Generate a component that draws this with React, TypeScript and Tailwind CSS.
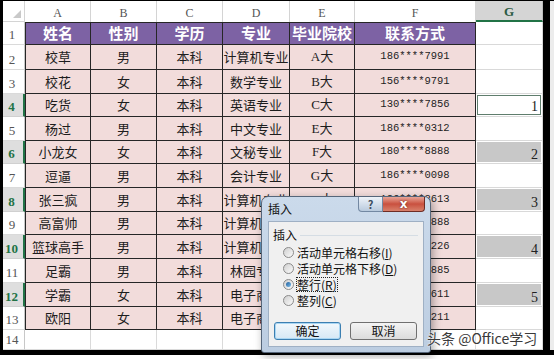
import React from 'react';

const CJK = '"Noto Sans CJK SC", "Noto Sans", sans-serif';
const SERIF_CJK = '"Liberation Serif", "Noto Sans CJK SC", serif';
const MONO = '"Liberation Mono", monospace';

const header = ['姓名', '性别', '学历', '专业', '毕业院校', '联系方式'];
const data: string[][] = [
  ['校草', '男', '本科', '计算机专业', 'A大', '186****7991'],
  ['校花', '女', '本科', '数学专业', 'B大', '156****9791'],
  ['吃货', '女', '本科', '英语专业', 'C大', '130****7856'],
  ['杨过', '男', '本科', '中文专业', 'E大', '186****0312'],
  ['小龙女', '女', '本科', '文秘专业', 'F大', '180****8888'],
  ['逗逼', '男', '本科', '会计专业', 'G大', '186****0098'],
  ['张三疯', '男', '本科', '计算机专业', 'H大', '186****3613'],
  ['高富帅', '男', '本科', '计算机专业', 'I大', '186****8888'],
  ['篮球高手', '男', '本科', '计算机专业', 'J大', '186****1226'],
  ['足霸', '男', '本科', '林园专业', 'K大', '186****8885'],
  ['学霸', '女', '本科', '电子商务', 'L大', '186****4611'],
  ['欧阳', '女', '本科', '电子商务', 'M大', '186****2211'],
];
const gVals: Record<number, string> = { 4: '1', 6: '2', 8: '3', 10: '4', 12: '5' };
const selected = new Set([4, 6, 8, 10, 12]);
const letters = ['A', 'B', 'C', 'D', 'E', 'F'];

function RowHeader({ n }: { n: number }) {
  const sel = selected.has(n);
  return (
    <div
      className={
        sel
          ? 'flex items-end justify-center pr-[3px] pb-[1px] bg-[#dedede] border-b border-[#d0d0d0] border-r-2 border-r-[#217346] text-[#217346] font-bold text-[13px] leading-[16px]'
          : 'flex items-end justify-center pr-[3px] pb-[1px] bg-white border-b border-[#dadada] border-r border-r-[#c8c8c8] text-[#555] text-[13px] leading-[16px]'
      }
      style={{ fontFamily: '"Liberation Serif", serif' }}
    >
      {n}
    </div>
  );
}

function GCell({ n }: { n: number }) {
  const v = gVals[n];
  if (n === 4) {
    return (
      <div className="border-b border-r border-[#d9d9d9] p-[1px]">
        <div
          className="h-full border border-[#5f7d6d] flex items-end justify-end pr-[2px] text-[14px] leading-[15px] text-[#222]"
          style={{ fontFamily: '"Liberation Serif", serif' }}
        >
          {v}
        </div>
      </div>
    );
  }
  if (v) {
    return (
      <div className="border-b border-r border-[#d9d9d9] px-[1px] pt-[1px] pb-[1px]">
        <div
          className="h-full bg-[#c8c8c8] flex items-end justify-end pr-[3px] text-[14px] leading-[15px] text-[#222]"
          style={{ fontFamily: '"Liberation Serif", serif' }}
        >
          {v}
        </div>
      </div>
    );
  }
  return <div className="border-b border-r border-[#d9d9d9] bg-white" />;
}

function Radio({ checked }: { checked?: boolean }) {
  return (
    <div className="w-[11px] h-[11px] rounded-full border border-[#8a8a8a] bg-gradient-to-br from-[#cfcfcf] to-[#fbfbfb] flex items-center justify-center shrink-0">
      {checked && <div className="w-[5px] h-[5px] rounded-full bg-gradient-to-br from-[#1f5d9c] to-[#7fc0ea]" />}
    </div>
  );
}

function Dialog() {
  const options: { label: string; key: string; checked?: boolean }[] = [
    { label: '活动单元格右移', key: 'I' },
    { label: '活动单元格下移', key: 'D' },
    { label: '整行', key: 'R', checked: true },
    { label: '整列', key: 'C' },
  ];
  return (
    <div
      className="absolute left-[261px] top-[196px] w-[170px] h-[157px] rounded-t-[7px] rounded-b-[3px] border border-[#56667a] bg-gradient-to-b from-[#cbdaeb] to-[#bccde1] shadow-[2px_3px_8px_rgba(0,0,0,0.35)] flex flex-col"
      style={{ fontFamily: CJK }}
    >
      <div className="h-[24px] flex items-start">
        <div className="pl-[6px] pt-[5px] text-[12px] leading-[14px] text-[#111]">插入</div>
        <div className="ml-auto mr-[5px] flex">
          <div className="w-[25px] h-[15px] rounded-bl-[4px] border border-t-0 border-[#7388a2] bg-gradient-to-b from-[#eef3f9] to-[#b9cadd] flex items-center justify-center text-[11px] leading-none font-bold text-[#3b4b5e]">
            ?
          </div>
          <div className="w-[42px] h-[15px] rounded-br-[4px] border border-t-0 border-l-0 border-[#6e2c24] bg-gradient-to-b from-[#e7a497] via-[#c9503f] to-[#d8806b] flex items-center justify-center text-[12px] leading-none font-bold text-white [text-shadow:0_0_2px_#5a1a12]" style={{ fontFamily: '"DejaVu Sans", sans-serif' }}>
            x
          </div>
        </div>
      </div>
      <div className="mx-[6px] h-[126px] bg-[#f0f0f0] border border-[#9fb0c4] flex flex-col">
        <div className="flex items-center pl-[4px] pt-[7px] pr-[5px]">
          <span className="text-[12px] leading-[12px] text-[#111]">插入</span>
          <div className="flex-1 h-px bg-[#d5dde4] ml-[3px]" />
        </div>
        <div className="mt-[3px] pl-[14px] flex flex-col">
          {options.map((o) => (
            <div key={o.key} className="h-[16px] flex items-center">
              <Radio checked={o.checked} />
              <span
                className={
                  o.checked
                    ? 'ml-[3px] text-[12px] leading-[13px] text-[#111] outline outline-1 outline-dotted outline-[#222]'
                    : 'ml-[3px] text-[12px] leading-[13px] text-[#111]'
                }
              >
                {o.label}(<span className="underline">{o.key}</span>)
              </span>
            </div>
          ))}
        </div>
        <div className="mt-[14px] pl-[5px] flex gap-[9px]">
          <div className="w-[67px] h-[18px] rounded-[3px] border border-[#3c7fb1] bg-gradient-to-b from-[#f2f8fc] to-[#d6e8f5] shadow-[inset_0_0_0_1px_#a9d6f3] flex items-center justify-center text-[12px] leading-none text-[#111]">
            确定
          </div>
          <div className="w-[67px] h-[18px] rounded-[3px] border border-[#707070] bg-gradient-to-b from-[#f4f4f4] to-[#dcdcdc] flex items-center justify-center text-[12px] leading-none text-[#111]">
            取消
          </div>
        </div>
      </div>
    </div>
  );
}

export default function App() {
  return (
    <div className="relative w-[554px] h-[359px] overflow-hidden bg-white flex flex-col">
      <div className="h-px bg-black w-full" />
      <div className="flex">
        <div className="w-[3px] bg-black" />
        <div className="grid grid-cols-[22px_66px_66px_66px_67px_65px_121px_67px] grid-rows-[21px_23px_25px_24px_23px_24px_23px_24px_24px_23px_24px_24px_24px_23px_20px]">
          {/* column header row */}
          <div className="bg-white border-r border-b border-[#d4d4d4] flex items-end justify-end pr-[3px] pb-[3px]">
            <div className="w-0 h-0 border-l-[8px] border-l-transparent border-b-[8px] border-b-[#c9c9c9]" />
          </div>
          {letters.map((l) => (
            <div
              key={l}
              className="bg-white border-r border-[#d4d4d4] flex items-center justify-center text-[12px] text-[#555] pt-[2px]"
              style={{ fontFamily: '"Liberation Serif", serif' }}
            >
              {l}
            </div>
          ))}
          <div
            className="bg-[#d5d5d5] border-r border-[#bdbdbd] border-b-2 border-b-[#217346] flex items-center justify-center text-[13px] font-bold text-[#2b5a43] pt-[2px]"
            style={{ fontFamily: '"Liberation Serif", serif' }}
          >
            G
          </div>

          {/* row 1 header */}
          <RowHeader n={1} />
          {header.map((h, i) => (
            <div
              key={h}
              className={
                (i === 0 ? 'border-l ' : '') +
                'border-t border-r border-b border-[#262626] bg-[#7d62a4] text-white font-bold text-[15px] flex items-center justify-center'
              }
              style={{ fontFamily: CJK }}
            >
              {h}
            </div>
          ))}
          <GCell n={1} />

          {data.map((row, ri) => {
            const n = ri + 2;
            return (
              <React.Fragment key={n}>
                <RowHeader n={n} />
                {row.map((c, ci) => (
                  <div
                    key={ci}
                    className={
                      (ci === 0 ? 'border-l ' : '') +
                      'border-r border-b border-[#262626] bg-[#f2dcdb] text-[#1d1d1d] flex items-center justify-center whitespace-nowrap overflow-hidden ' +
                      (ci === 5 ? 'text-[10.5px]' : 'text-[13px]')
                    }
                    style={{ fontFamily: ci === 5 ? MONO : ci === 4 ? SERIF_CJK : CJK }}
                  >
                    {c}
                  </div>
                ))}
                <GCell n={n} />
              </React.Fragment>
            );
          })}

          {/* row 14 */}
          <RowHeader n={14} />
          {[0, 1, 2, 3, 4, 5, 6].map((i) => (
            <div key={i} className="border-r border-b border-[#dadada] bg-white" />
          ))}
        </div>
        <div className="w-[7px] bg-black" />
        <div className="w-[4px] bg-[#ececec]" />
      </div>
      <div className="h-[5px] bg-black w-full" />
      <div className="h-[4px] overflow-hidden flex">
        <div
          className="w-[25px] flex justify-center pr-[3px] text-[13px] leading-[13px] text-[#666] pt-[1px]"
          style={{ fontFamily: '"Liberation Serif", serif' }}
        >
          15
        </div>
      </div>

      <Dialog />

      <div
        className="absolute left-[427px] top-[329px] text-[14px] leading-[18px] text-[#3a3a3a] whitespace-nowrap [text-shadow:0_0_2px_#fff,0_0_2px_#fff]"
        style={{ fontFamily: CJK }}
      >
        头条 @Office学习
      </div>
    </div>
  );
}
